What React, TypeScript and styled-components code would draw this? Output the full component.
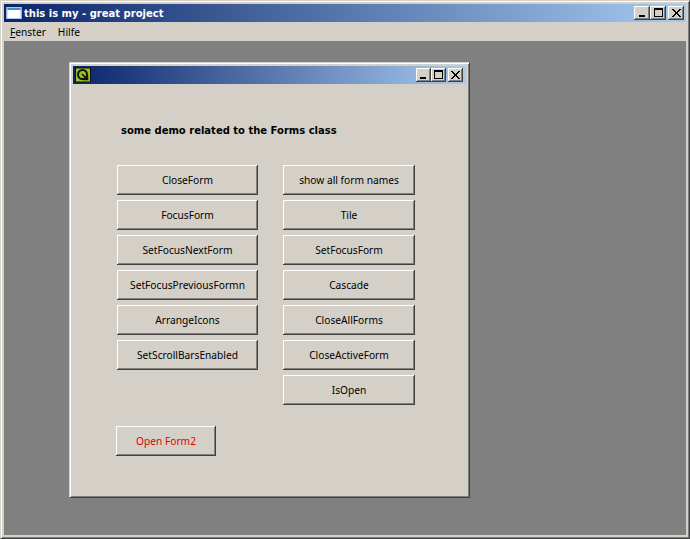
import React from "react";
import styled, { createGlobalStyle } from "styled-components";

const Global = createGlobalStyle`
  html, body {
    margin: 0;
    padding: 0;
    background: #d4d0c8;
  }
  * {
    box-sizing: border-box;
  }
`;

const Frame = styled.div`
  width: 690px;
  height: 539px;
  background: #d4d0c8;
  border-style: solid;
  border-width: 1px;
  border-color: #d4d0c8 #404040 #404040 #d4d0c8;
  box-shadow: inset 1px 1px 0 #fff, inset -1px -1px 0 #808080;
  padding: 3px;
  display: flex;
  flex-direction: column;
  font-family: "Noto Sans", Tahoma, sans-serif;
  font-size: 10.2px;
  overflow: hidden;
`;

const TitleBar = styled.div<{ $child?: boolean }>`
  height: 18px;
  flex: none;
  display: flex;
  align-items: center;
  padding: 0 ${(p) => (p.$child ? "3px" : "2px")} 0 2px;
  background: linear-gradient(90deg, #0a246a, #a6caf0);
  color: #fff;
  font-family: "DejaVu Sans", sans-serif;
  font-weight: bold;
  font-size: 10px;
`;

const AppIcon = styled.svg`
  width: 16px;
  height: 16px;
  flex: none;
  margin-right: 2px;
`;

const TitleText = styled.span`
  flex: 1;
  white-space: nowrap;
`;

const Controls = styled.div`
  display: flex;
  flex: none;
`;

const CtlButton = styled.div<{ $gap?: boolean; $child?: boolean }>`
  width: ${(p) => (p.$child ? "15px" : "16px")};
  height: 14px;
  margin-left: ${(p) => (p.$gap ? "2px" : "0")};
  background: #d4d0c8;
  box-shadow: inset -1px -1px 0 #404040, inset 1px 1px 0 #fff,
    inset -2px -2px 0 #808080;
  display: flex;
  align-items: center;
  justify-content: center;
`;

const CtlGlyph = styled.svg`
  width: 15px;
  height: 14px;
  display: block;
`;

const MenuBar = styled.div`
  height: 19px;
  flex: none;
  display: flex;
  align-items: center;
  padding: 1px 0 0 6px;
  gap: 12px;
  color: #000;
`;

const MenuItem = styled.span`
  u {
    text-underline-offset: 1px;
  }
`;

const Workspace = styled.div`
  position: relative;
  flex: 1;
  background: #808080;
`;

const ChildWindow = styled.div`
  position: absolute;
  left: 65px;
  top: 21px;
  width: 401px;
  height: 436px;
  background: #d4d0c8;
  border-style: solid;
  border-width: 1px;
  border-color: #d4d0c8 #404040 #404040 #d4d0c8;
  box-shadow: inset 1px 1px 0 #fff, inset -1px -1px 0 #808080;
  padding: 3px;
  display: flex;
  flex-direction: column;
`;

const Content = styled.div`
  flex: 1;
  padding: 40px 0 0 43px;
  display: flex;
  flex-direction: column;
`;

const Heading = styled.div`
  font-family: "DejaVu Sans", sans-serif;
  font-weight: bold;
  font-size: 10px;
  line-height: 13px;
  color: #000;
  padding-left: 5px;
  margin-bottom: 28px;
`;

const Columns = styled.div`
  display: flex;
  gap: 25px;
  align-items: flex-start;
  padding-left: 1px;
`;

const Column = styled.div`
  display: flex;
  flex-direction: column;
  gap: 5px;
`;

const PushButton = styled.button<{ $width: number; $red?: boolean }>`
  width: ${(p) => p.$width}px;
  height: 30px;
  padding: 0;
  border: 0;
  background: #d4d0c8;
  box-shadow: inset -1px -1px 0 #404040, inset 1px 1px 0 #fff,
    inset -2px -2px 0 #808080;
  font-family: inherit;
  font-size: 10.2px;
  color: ${(p) => (p.$red ? "#e00000" : "#000")};
`;

const OpenButtonRow = styled.div`
  margin-top: 21px;
`;

const controlGlyphs = {
  min: <rect x="4" y="9" width="6" height="2" fill="#000" />,
  max: (
    <path
      d="M3.5 2.5h8v8h-8zM3 3h9"
      fill="none"
      stroke="#000"
      strokeWidth="1"
      shapeRendering="crispEdges"
    />
  ),
  close: (
    <path
      d="M3 3l8 8M4 3l8 8M11 3l-8 8M12 3l-8 8"
      fill="none"
      stroke="#000"
      strokeWidth="1"
      shapeRendering="crispEdges"
    />
  ),
};

const WindowControls = ({ child }: { child?: boolean }) => (
  <Controls>
    <CtlButton $child={child}>
      <CtlGlyph viewBox="0 0 15 14">{controlGlyphs.min}</CtlGlyph>
    </CtlButton>
    <CtlButton $child={child}>
      <CtlGlyph viewBox="0 0 15 14">{controlGlyphs.max}</CtlGlyph>
    </CtlButton>
    <CtlButton $child={child} $gap>
      <CtlGlyph viewBox="0 0 15 14">{controlGlyphs.close}</CtlGlyph>
    </CtlButton>
  </Controls>
);

const leftButtons = [
  "CloseForm",
  "FocusForm",
  "SetFocusNextForm",
  "SetFocusPreviousFormn",
  "ArrangeIcons",
  "SetScrollBarsEnabled",
];

const rightButtons = [
  "show all form names",
  "Tile",
  "SetFocusForm",
  "Cascade",
  "CloseAllForms",
  "CloseActiveForm",
  "IsOpen",
];

const App = () => {
  return (
    <>
      <Global />
      <Frame>
        <TitleBar>
          <AppIcon viewBox="0 0 16 16">
            <rect x="0.5" y="2" width="15" height="12" fill="#fff" />
            <rect x="0.5" y="2" width="15" height="3" fill="#4a8ad0" />
            <rect x="1" y="2.5" width="14" height="11" fill="none" stroke="#a6caf0" />
          </AppIcon>
          <TitleText>this is my - great project</TitleText>
          <WindowControls />
        </TitleBar>
        <MenuBar>
          <MenuItem>
            <u>F</u>enster
          </MenuItem>
          <MenuItem>Hilfe</MenuItem>
        </MenuBar>
        <Workspace>
          <ChildWindow>
            <TitleBar $child>
              <AppIcon viewBox="0 0 16 16">
                <rect x="0" y="0.5" width="16" height="15" fill="#111" />
                <rect x="1" y="1.5" width="14" height="13" fill="#9ac31c" />
                <circle cx="7.5" cy="7.5" r="4.5" fill="none" stroke="#111" strokeWidth="2" />
                <path d="M7 7l5.5 5.5M8 12.5h4.5v-4" fill="none" stroke="#111" strokeWidth="1.6" />
              </AppIcon>
              <TitleText />
              <WindowControls child />
            </TitleBar>
            <Content>
              <Heading>some demo related to the Forms class</Heading>
              <Columns>
                <Column>
                  {leftButtons.map((name) => (
                    <PushButton key={name} $width={141}>
                      {name}
                    </PushButton>
                  ))}
                </Column>
                <Column>
                  {rightButtons.map((name) => (
                    <PushButton key={name} $width={132}>
                      {name}
                    </PushButton>
                  ))}
                </Column>
              </Columns>
              <OpenButtonRow>
                <PushButton $width={100} $red>
                  Open Form2
                </PushButton>
              </OpenButtonRow>
            </Content>
          </ChildWindow>
        </Workspace>
      </Frame>
    </>
  );
};

export default App;
